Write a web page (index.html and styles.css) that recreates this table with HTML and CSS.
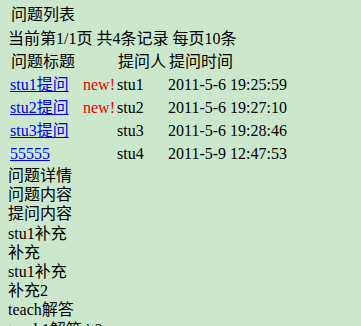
FILE: index.html
```html
<!DOCTYPE html>
<html lang="zh-CN">
<head>
<meta charset="utf-8">
<title>问题列表</title>
<link rel="stylesheet" href="styles.css">
</head>
<body>
<div class="page">
  <div class="title">问题列表</div>
  <div class="summary">当前第1/1页 共4条记录 每页10条</div>
  <div class="list">
    <div class="cell head span2">问题标题</div>
    <div class="cell head">提问人</div>
    <div class="cell head">提问时间</div>

    <div class="cell"><a href="#">stu1提问</a></div>
    <div class="cell new">new!</div>
    <div class="cell">stu1</div>
    <div class="cell">2011-5-6 19:25:59</div>

    <div class="cell"><a href="#">stu2提问</a></div>
    <div class="cell new">new!</div>
    <div class="cell">stu2</div>
    <div class="cell">2011-5-6 19:27:10</div>

    <div class="cell"><a href="#">stu3提问</a></div>
    <div class="cell new"></div>
    <div class="cell">stu3</div>
    <div class="cell">2011-5-6 19:28:46</div>

    <div class="cell"><a href="#">55555</a></div>
    <div class="cell new"></div>
    <div class="cell">stu4</div>
    <div class="cell">2011-5-9 12:47:53</div>
  </div>
  <div class="detail">
    <div class="line">问题详情</div>
    <div class="line">问题内容</div>
    <div class="line">提问内容</div>
    <div class="line">stu1补充</div>
    <div class="line">补充</div>
    <div class="line">stu1补充</div>
    <div class="line">补充2</div>
    <div class="line">teach解答</div>
    <div class="line">teach1解答 it2</div>
  </div>
</div>
</body>
</html>
```
FILE: styles.css
```css
html, body {
  margin: 0;
  padding: 0;
  background: #cce8cc;
}
body {
  font-family: "Liberation Serif", "Noto Sans CJK SC", serif;
  font-size: 16px;
  color: #000;
  overflow: hidden;
}
.page {
  padding: 5px 0 0 8px;
}
.title {
  line-height: 19px;
  padding-left: 3px;
}
.summary {
  line-height: 19px;
  margin-top: 5px;
}
.list {
  margin-top: 2px;
  padding-left: 2px;
  display: grid;
  grid-template-columns: 73px 34px 51px auto;
  grid-auto-rows: 23px;
}
.cell {
  line-height: 23px;
  white-space: nowrap;
}
.head {
  padding-left: 1px;
}
.span2 {
  grid-column: span 2;
}
.cell a {
  color: #0000ee;
  text-decoration: underline;
}
.new {
  color: #e00000;
}
.detail {
  margin-top: 1px;
}
.line {
  line-height: 19.2px;
  white-space: nowrap;
}
```
